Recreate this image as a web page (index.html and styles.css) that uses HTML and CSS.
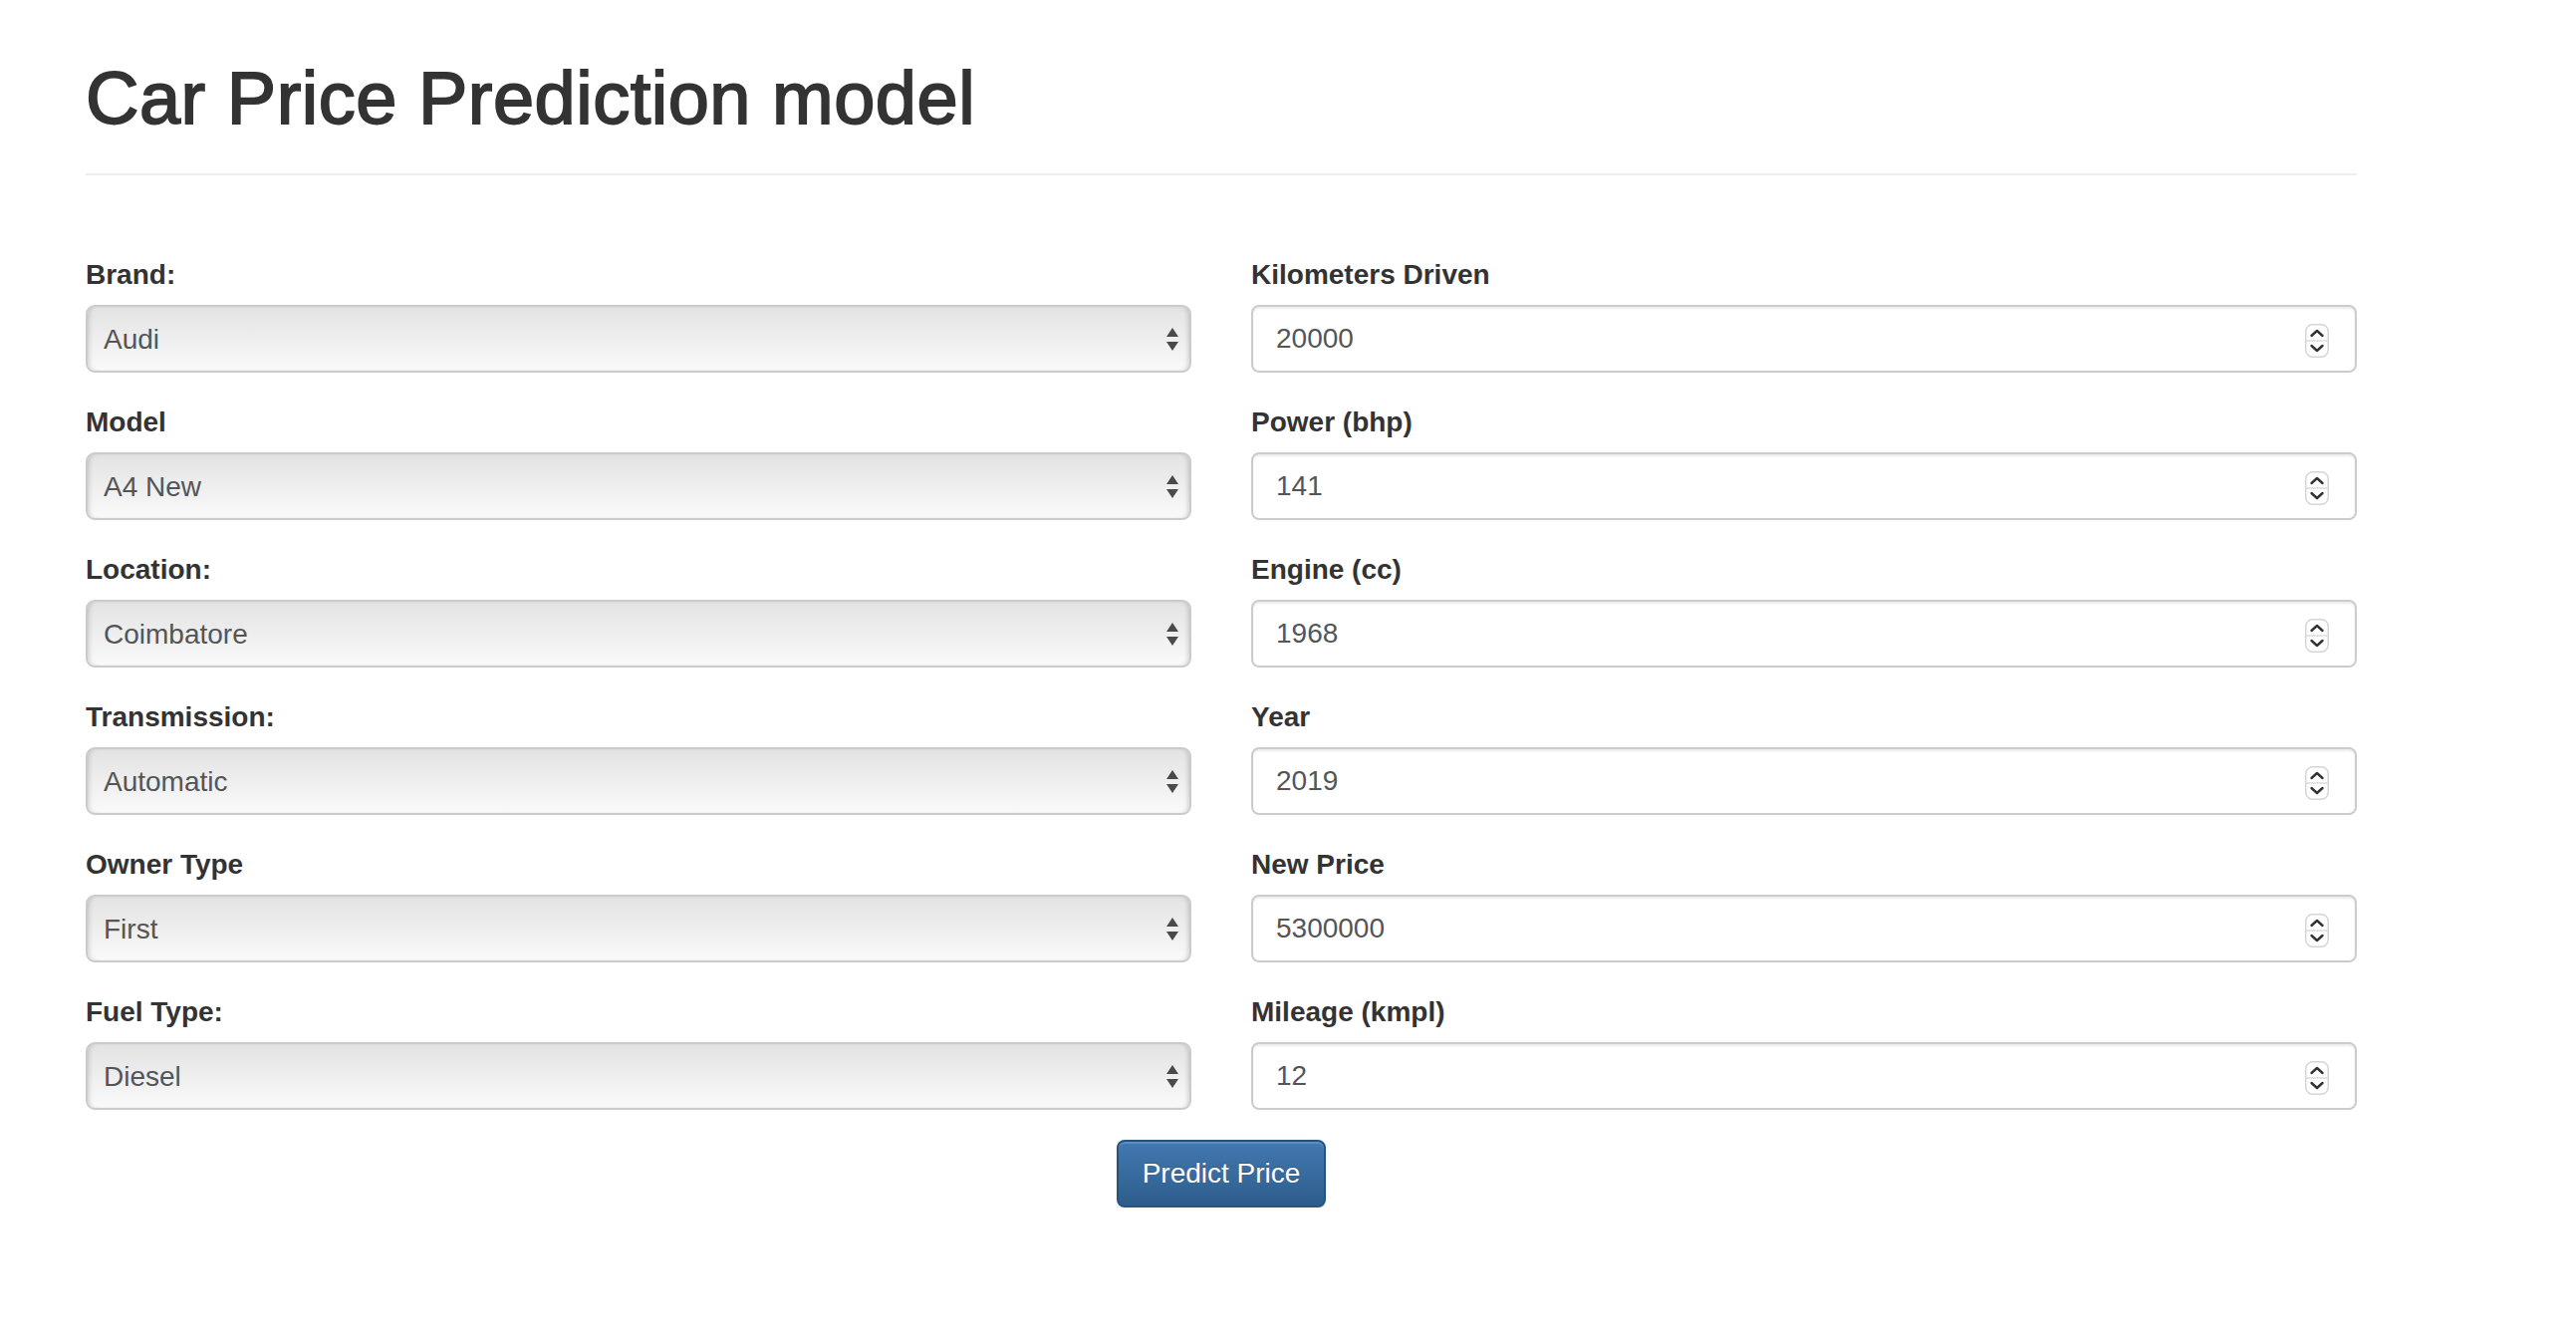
FILE: index.html
```html
<!DOCTYPE html>
<html lang="en">
<head>
<meta charset="utf-8">
<title>Car Price Prediction</title>
<link rel="stylesheet" href="styles.css">
</head>
<body>
<div class="page">
  <div class="page-header">
    <h1 class="title">Car Price Prediction model</h1>
  </div>
  <form class="form">
    <div class="columns">
      <div class="col">
        <div class="form-group">
          <label class="label" for="brand">Brand:</label>
          <div class="select-field">
            <select id="brand" class="select"><option>Audi</option></select>
            <svg class="select-arrows" width="12" height="23" viewBox="0 0 12 23"><polygon points="6,0 12,9 0,9"/><polygon points="0,14 12,14 6,23"/></svg>
          </div>
        </div>
        <div class="form-group">
          <label class="label" for="model">Model</label>
          <div class="select-field">
            <select id="model" class="select"><option>A4 New</option></select>
            <svg class="select-arrows" width="12" height="23" viewBox="0 0 12 23"><polygon points="6,0 12,9 0,9"/><polygon points="0,14 12,14 6,23"/></svg>
          </div>
        </div>
        <div class="form-group">
          <label class="label" for="location">Location:</label>
          <div class="select-field">
            <select id="location" class="select"><option>Coimbatore</option></select>
            <svg class="select-arrows" width="12" height="23" viewBox="0 0 12 23"><polygon points="6,0 12,9 0,9"/><polygon points="0,14 12,14 6,23"/></svg>
          </div>
        </div>
        <div class="form-group">
          <label class="label" for="transmission">Transmission:</label>
          <div class="select-field">
            <select id="transmission" class="select"><option>Automatic</option></select>
            <svg class="select-arrows" width="12" height="23" viewBox="0 0 12 23"><polygon points="6,0 12,9 0,9"/><polygon points="0,14 12,14 6,23"/></svg>
          </div>
        </div>
        <div class="form-group">
          <label class="label" for="owner">Owner Type</label>
          <div class="select-field">
            <select id="owner" class="select"><option>First</option></select>
            <svg class="select-arrows" width="12" height="23" viewBox="0 0 12 23"><polygon points="6,0 12,9 0,9"/><polygon points="0,14 12,14 6,23"/></svg>
          </div>
        </div>
        <div class="form-group">
          <label class="label" for="fuel">Fuel Type:</label>
          <div class="select-field">
            <select id="fuel" class="select"><option>Diesel</option></select>
            <svg class="select-arrows" width="12" height="23" viewBox="0 0 12 23"><polygon points="6,0 12,9 0,9"/><polygon points="0,14 12,14 6,23"/></svg>
          </div>
        </div>
      </div>
      <div class="col">
        <div class="form-group">
          <label class="label" for="km">Kilometers Driven</label>
          <div class="num-field">
            <input id="km" class="num" type="number" value="20000">
            <svg class="spinner" width="24" height="34" viewBox="0 0 24 34"><rect x="0.75" y="0.75" width="22.5" height="32.5" rx="7" fill="#fff" stroke="#d6d6d6" stroke-width="1.5"/><line x1="1" y1="17" x2="23" y2="17" stroke="#dcdcdc" stroke-width="1.5"/><path d="M6.5 12 L12 7 L17.5 12" fill="none" stroke="#333" stroke-width="2.4" stroke-linecap="round" stroke-linejoin="round"/><path d="M6.5 22 L12 27 L17.5 22" fill="none" stroke="#333" stroke-width="2.4" stroke-linecap="round" stroke-linejoin="round"/></svg>
          </div>
        </div>
        <div class="form-group">
          <label class="label" for="power">Power (bhp)</label>
          <div class="num-field">
            <input id="power" class="num" type="number" value="141">
            <svg class="spinner" width="24" height="34" viewBox="0 0 24 34"><rect x="0.75" y="0.75" width="22.5" height="32.5" rx="7" fill="#fff" stroke="#d6d6d6" stroke-width="1.5"/><line x1="1" y1="17" x2="23" y2="17" stroke="#dcdcdc" stroke-width="1.5"/><path d="M6.5 12 L12 7 L17.5 12" fill="none" stroke="#333" stroke-width="2.4" stroke-linecap="round" stroke-linejoin="round"/><path d="M6.5 22 L12 27 L17.5 22" fill="none" stroke="#333" stroke-width="2.4" stroke-linecap="round" stroke-linejoin="round"/></svg>
          </div>
        </div>
        <div class="form-group">
          <label class="label" for="engine">Engine (cc)</label>
          <div class="num-field">
            <input id="engine" class="num" type="number" value="1968">
            <svg class="spinner" width="24" height="34" viewBox="0 0 24 34"><rect x="0.75" y="0.75" width="22.5" height="32.5" rx="7" fill="#fff" stroke="#d6d6d6" stroke-width="1.5"/><line x1="1" y1="17" x2="23" y2="17" stroke="#dcdcdc" stroke-width="1.5"/><path d="M6.5 12 L12 7 L17.5 12" fill="none" stroke="#333" stroke-width="2.4" stroke-linecap="round" stroke-linejoin="round"/><path d="M6.5 22 L12 27 L17.5 22" fill="none" stroke="#333" stroke-width="2.4" stroke-linecap="round" stroke-linejoin="round"/></svg>
          </div>
        </div>
        <div class="form-group">
          <label class="label" for="year">Year</label>
          <div class="num-field">
            <input id="year" class="num" type="number" value="2019">
            <svg class="spinner" width="24" height="34" viewBox="0 0 24 34"><rect x="0.75" y="0.75" width="22.5" height="32.5" rx="7" fill="#fff" stroke="#d6d6d6" stroke-width="1.5"/><line x1="1" y1="17" x2="23" y2="17" stroke="#dcdcdc" stroke-width="1.5"/><path d="M6.5 12 L12 7 L17.5 12" fill="none" stroke="#333" stroke-width="2.4" stroke-linecap="round" stroke-linejoin="round"/><path d="M6.5 22 L12 27 L17.5 22" fill="none" stroke="#333" stroke-width="2.4" stroke-linecap="round" stroke-linejoin="round"/></svg>
          </div>
        </div>
        <div class="form-group">
          <label class="label" for="newprice">New Price</label>
          <div class="num-field">
            <input id="newprice" class="num" type="number" value="5300000">
            <svg class="spinner" width="24" height="34" viewBox="0 0 24 34"><rect x="0.75" y="0.75" width="22.5" height="32.5" rx="7" fill="#fff" stroke="#d6d6d6" stroke-width="1.5"/><line x1="1" y1="17" x2="23" y2="17" stroke="#dcdcdc" stroke-width="1.5"/><path d="M6.5 12 L12 7 L17.5 12" fill="none" stroke="#333" stroke-width="2.4" stroke-linecap="round" stroke-linejoin="round"/><path d="M6.5 22 L12 27 L17.5 22" fill="none" stroke="#333" stroke-width="2.4" stroke-linecap="round" stroke-linejoin="round"/></svg>
          </div>
        </div>
        <div class="form-group">
          <label class="label" for="mileage">Mileage (kmpl)</label>
          <div class="num-field">
            <input id="mileage" class="num" type="number" value="12">
            <svg class="spinner" width="24" height="34" viewBox="0 0 24 34"><rect x="0.75" y="0.75" width="22.5" height="32.5" rx="7" fill="#fff" stroke="#d6d6d6" stroke-width="1.5"/><line x1="1" y1="17" x2="23" y2="17" stroke="#dcdcdc" stroke-width="1.5"/><path d="M6.5 12 L12 7 L17.5 12" fill="none" stroke="#333" stroke-width="2.4" stroke-linecap="round" stroke-linejoin="round"/><path d="M6.5 22 L12 27 L17.5 22" fill="none" stroke="#333" stroke-width="2.4" stroke-linecap="round" stroke-linejoin="round"/></svg>
          </div>
        </div>
      </div>
    </div>
    <div class="actions">
      <button type="button" class="btn-primary">Predict Price</button>
    </div>
  </form>
</div>
</body>
</html>
```

FILE: styles.css
```css
html, body {
  margin: 0;
  padding: 0;
  background: #fff;
}

body {
  font-family: "Liberation Sans", Arial, Helvetica, sans-serif;
  color: #333;
}

.page {
  width: 2280px;
  padding: 58px 0 0 86px;
}

.page-header {
  padding-bottom: 34px;
  border-bottom: 2px solid #eee;
  margin-bottom: 80px;
}

.title {
  margin: 0;
  font-size: 74px;
  line-height: 82px;
  font-weight: normal;
  color: #333;
  -webkit-text-stroke: 1.8px #333;
  letter-spacing: 0.5px;
}

.columns {
  display: grid;
  grid-template-columns: 1110px 1110px;
  column-gap: 60px;
}

.col {
  display: flex;
  flex-direction: column;
}

.form-group {
  margin-bottom: 30px;
}

.label {
  display: block;
  font-size: 28px;
  line-height: 40px;
  font-weight: bold;
  color: #333;
  margin-bottom: 10px;
}

.select-field {
  box-sizing: border-box;
  height: 68px;
  display: flex;
  align-items: center;
  border: 2px solid #cbcbcb;
  border-radius: 9px;
  background: linear-gradient(to bottom, #e3e3e3 0%, #eeeeee 50%, #fafafa 100%);
  box-shadow: inset 4px 0 5px -3px rgba(0, 0, 0, 0.18), inset -4px 0 5px -3px rgba(0, 0, 0, 0.18);
}

.select {
  flex: 1;
  height: 100%;
  -webkit-appearance: none;
  appearance: none;
  border: none;
  outline: none;
  background: transparent;
  font-family: "Liberation Sans", Arial, sans-serif;
  font-size: 28px;
  color: #555;
  padding: 0 0 0 16px;
  margin: 0;
}

.select-arrows {
  flex: none;
  fill: #4a4a4a;
  margin-right: 11px;
  pointer-events: none;
}

.num-field {
  box-sizing: border-box;
  height: 68px;
  display: flex;
  align-items: center;
  border: 2px solid #cccccc;
  border-radius: 8px;
  background: #fff;
  box-shadow: inset 0 2px 2px rgba(0, 0, 0, 0.075);
}

.num {
  flex: 1;
  min-width: 0;
  height: 100%;
  border: none;
  outline: none;
  background: transparent;
  font-family: "Liberation Sans", Arial, sans-serif;
  font-size: 28px;
  color: #555;
  padding: 0 0 0 23px;
  margin: 0;
  -moz-appearance: textfield;
}

.num::-webkit-inner-spin-button,
.num::-webkit-outer-spin-button {
  -webkit-appearance: none;
  margin: 0;
}

.spinner {
  flex: none;
  margin-right: 26px;
  margin-top: 3px;
}

.actions {
  display: flex;
  justify-content: center;
}

.btn-primary {
  box-sizing: border-box;
  height: 68px;
  padding: 12px 24px;
  font-family: "Liberation Sans", Arial, sans-serif;
  font-size: 28px;
  line-height: 40px;
  color: #fff;
  border: 2px solid #245580;
  border-radius: 8px;
  background: linear-gradient(to bottom, #4279b2 0%, #2e5d8c 100%);
  box-shadow: inset 0 2px 0 rgba(255, 255, 255, 0.15), 0 2px 2px rgba(0, 0, 0, 0.075);
  text-shadow: 0 -1px 0 rgba(0, 0, 0, 0.2);
  cursor: pointer;
}
```
